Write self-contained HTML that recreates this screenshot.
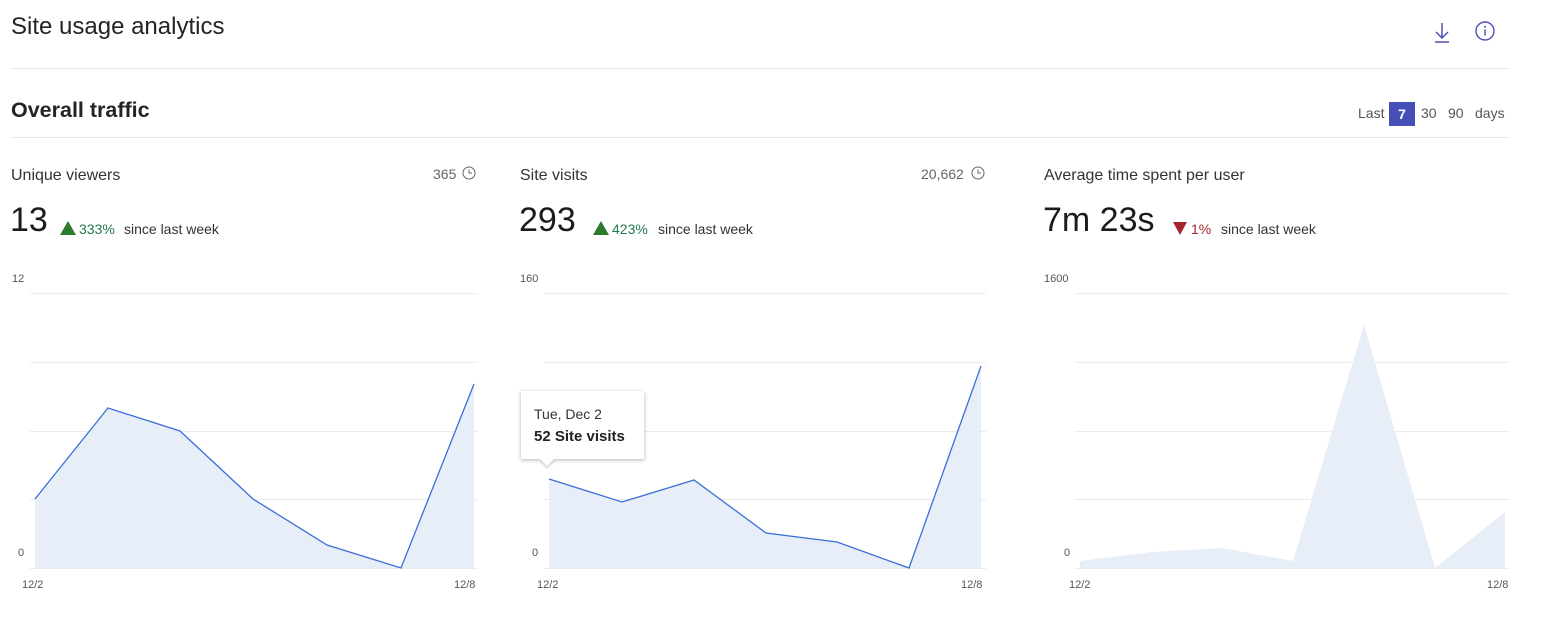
<!DOCTYPE html><html><head><style>
body{margin:0;width:1542px;height:617px;background:#fff;font-family:"Liberation Sans",sans-serif;color:#252423;position:relative;overflow:hidden}
.a{position:absolute;white-space:nowrap}
.hr{position:absolute;height:1px;background:#e6e6e6}
.t{font-size:16px;color:#333}
.big{font-size:34px;color:#1b1b1b}
.up{color:#237b4b;font-size:14px}
.dn{color:#a4262c;font-size:14px}
.s{font-size:14px;color:#333}
.ax{font-size:11px;color:#555}
.tri{font-size:17px}
</style></head><body>
<div class="a" style="left:11px;top:13px;font-size:24px;color:#242424">Site usage analytics</div>
<svg class="a" style="left:1432px;top:20px" width="20" height="24" viewBox="0 0 20 24"><path d="M10 3v15M4 12l6 6 6-6M3 22h14" stroke="#4f52b2" stroke-width="1.5" fill="none"/></svg>
<svg class="a" style="left:1474px;top:20px" width="22" height="22" viewBox="0 0 22 22"><circle cx="11" cy="11" r="9" stroke="#4f52b2" stroke-width="1.4" fill="none"/><path d="M11 9.5v6" stroke="#4f52b2" stroke-width="1.5"/><circle cx="11" cy="6.8" r="1" fill="#4f52b2"/></svg>
<div class="hr" style="left:11px;top:68px;width:1498px"></div>
<div class="a" style="left:11px;top:98px;font-size:21.5px;font-weight:bold;color:#252423">Overall traffic</div>
<div class="a" style="left:1358px;top:105px;font-size:14px;color:#555">Last</div>
<div class="a" style="left:1389px;top:102px;width:26px;height:24px;background:#464eb8;color:#fff;font-weight:bold;font-size:14px;text-align:center;line-height:24px">7</div>
<div class="a" style="left:1421px;top:105px;font-size:14px;color:#555">30</div>
<div class="a" style="left:1448px;top:105px;font-size:14px;color:#555">90</div>
<div class="a" style="left:1475px;top:105px;font-size:14px;color:#555">days</div>
<div class="hr" style="left:11px;top:137px;width:1498px"></div>

<div class="a t" style="left:11px;top:167px">Unique viewers</div>
<div class="a s" style="left:433px;top:166px;color:#666">365</div>
<div class="a t" style="left:520px;top:167px">Site visits</div>
<div class="a s" style="left:921px;top:166px;color:#666">20,662</div>
<div class="a t" style="left:1044px;top:167px">Average time spent per user</div>
<svg class="a" style="left:462px;top:166px" width="14" height="14"><circle cx="7" cy="7" r="6" stroke="#666" fill="none"/><path d="M7 3.5V7h3" stroke="#666" fill="none"/></svg>
<svg class="a" style="left:971px;top:166px" width="14" height="14"><circle cx="7" cy="7" r="6" stroke="#666" fill="none"/><path d="M7 3.5V7h3" stroke="#666" fill="none"/></svg>

<div class="a big" style="left:10px;top:201px">13</div>
<svg class="a" style="left:60px;top:221px" width="16" height="14"><path d="M8 0L16 14H0Z" fill="#2d7a2d"/></svg>
<div class="a up" style="left:79px;top:221px">333%</div><div class="a s" style="left:124px;top:221px">since last week</div>
<div class="a big" style="left:519px;top:201px">293</div>
<svg class="a" style="left:593px;top:221px" width="16" height="14"><path d="M8 0L16 14H0Z" fill="#2d7a2d"/></svg>
<div class="a up" style="left:612px;top:221px">423%</div><div class="a s" style="left:658px;top:221px">since last week</div>
<div class="a big" style="left:1043px;top:201px">7m 23s</div>
<svg class="a" style="left:1173px;top:222px" width="14" height="13"><path d="M0 0H14L7 13Z" fill="#a4262c"/></svg>
<div class="a dn" style="left:1191px;top:221px">1%</div><div class="a s" style="left:1221px;top:221px">since last week</div>

<div class="a ax" style="left:12px;top:273px">12</div>
<div class="a ax" style="left:520px;top:273px">160</div>
<div class="a ax" style="left:1044px;top:273px">1600</div>
<div class="a ax" style="left:18px;top:547px">0</div>
<div class="a ax" style="left:532px;top:547px">0</div>
<div class="a ax" style="left:1064px;top:547px">0</div>
<div class="a ax" style="left:22px;top:579px">12/2</div><div class="a ax" style="left:454px;top:579px">12/8</div>
<div class="a ax" style="left:537px;top:579px">12/2</div><div class="a ax" style="left:961px;top:579px">12/8</div>
<div class="a ax" style="left:1069px;top:579px">12/2</div><div class="a ax" style="left:1487px;top:579px">12/8</div>

<svg class="a" style="left:0;top:0" width="1542" height="617">
<g stroke="#ececec" stroke-width="1">
<path d="M30 293.5H478M30 362.5H478M30 431.5H478M30 499.5H478M30 568.5H478"/>
<path d="M544 293.5H986M544 362.5H986M544 431.5H986M544 499.5H986M544 568.5H986"/>
<path d="M1075 293.5H1509M1075 362.5H1509M1075 431.5H1509M1075 499.5H1509M1075 568.5H1509"/>
</g>
<path d="M35 499L108 408L180 431L253 499L327 545L401 568L474 384V568H35Z" fill="#e8eef8"/>
<path d="M35 499L108 408L180 431L253 499L327 545L401 568L474 384" stroke="#3a6fd8" stroke-width="1.3" fill="none"/>
<path d="M549 479L622 502L694 480L766 533L837 542L909 568L981 366V568H549Z" fill="#e8eef8"/>
<path d="M549 479L622 502L694 480L766 533L837 542L909 568L981 366" stroke="#3a6fd8" stroke-width="1.3" fill="none"/>
<path d="M1080 561L1152 552L1222 548L1293 561L1364 325L1435 568L1505 512V568H1080Z" fill="#e8eef8"/>
</svg>

<div class="a" style="left:521px;top:391px;width:123px;height:68px;background:#fff;box-shadow:0 1px 4px rgba(0,0,0,.3)"></div>
<div class="a" style="left:542px;top:454px;width:10px;height:10px;background:#fff;transform:rotate(45deg);box-shadow:2px 2px 2px rgba(0,0,0,.15)"></div>
<div class="a" style="left:521px;top:391px;width:123px;height:64px;background:#fff"></div>
<div class="a" style="left:534px;top:406px;font-size:14px;color:#333">Tue, Dec 2</div>
<div class="a" style="left:534px;top:428px;font-size:15px;font-weight:bold;color:#222">52 Site visits</div>
</body></html>
